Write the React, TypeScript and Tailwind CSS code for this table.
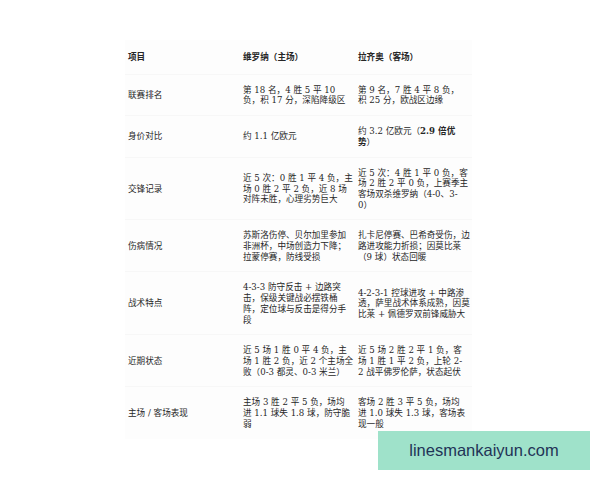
import type { ReactNode } from 'react'

type Row = {
  label: string
  home: ReactNode[]
  away: ReactNode[]
}

const rows: Row[] = [
  {
    label: '联赛排名',
    home: ['第 18 名，4 胜 5 平 10', '负，积 17 分，深陷降级区'],
    away: ['第 9 名，7 胜 4 平 8 负，', '积 25 分，欧战区边缘'],
  },
  {
    label: '身价对比',
    home: ['约 1.1 亿欧元'],
    away: [
      <>
        约 3.2 亿欧元（<b>2.9 倍优</b>
      </>,
      <>
        <b>势</b>）
      </>,
    ],
  },
  {
    label: '交锋记录',
    home: ['近 5 次：0 胜 1 平 4 负，主', '场 0 胜 2 平 2 负，近 8 场', '对阵未胜，心理劣势巨大'],
    away: ['近 5 次：4 胜 1 平 0 负，客', '场 2 胜 2 平 0 负，上赛季主', '客场双杀维罗纳（4-0、3-', '0）'],
  },
  {
    label: '伤病情况',
    home: ['苏斯洛伤停、贝尔加里参加', '非洲杯，中场创造力下降；', '拉蒙停赛，防线受损'],
    away: ['扎卡尼停赛、巴希奇受伤，边', '路进攻能力折损；因莫比莱', '（9 球）状态回暖'],
  },
  {
    label: '战术特点',
    home: ['4-3-3 防守反击 + 边路突', '击，保级关键战必摆铁桶', '阵，定位球与反击是得分手', '段'],
    away: ['4-2-3-1 控球进攻 + 中路渗', '透，萨里战术体系成熟，因莫', '比莱 + 佩德罗双前锋威胁大'],
  },
  {
    label: '近期状态',
    home: ['近 5 场 1 胜 0 平 4 负，主', '场 1 胜 2 负，近 2 个主场全', '败（0-3 都灵、0-3 米兰）'],
    away: ['近 5 场 2 胜 2 平 1 负，客', '场 1 胜 1 平 2 负，上轮 2-', '2 战平佛罗伦萨，状态起伏'],
  },
  {
    label: '主场 / 客场表现',
    home: ['主场 3 胜 2 平 5 负，场均', '进 1.1 球失 1.8 球，防守脆', '弱'],
    away: ['客场 2 胜 3 平 5 负，场均', '进 1.0 球失 1.3 球，客场表', '现一般'],
  },
]

function Lines({ lines }: { lines: ReactNode[] }) {
  return (
    <div className="flex flex-col">
      {lines.map((line, i) => (
        <span key={i} className="whitespace-nowrap">
          {line}
        </span>
      ))}
    </div>
  )
}

export default function App() {
  return (
    <div
      className="relative w-[600px] h-[480px] bg-white overflow-hidden text-[#262626] text-[8.6px] leading-[10.7px]"
      style={{ fontFamily: '"DejaVu Serif", "Noto Sans CJK SC", serif' }}
    >
      <div className="ml-[125px] mt-[40px] w-[347px] bg-[#fdfdfd]">
        {/* Header */}
        <div className="grid grid-cols-[118px_115px_114px] items-center pt-[12px] pb-[11px] border-b border-[#f7f7f7] font-bold">
          <div className="pl-[3px]">项目</div>
          <div>维罗纳（主场）</div>
          <div>拉齐奥（客场）</div>
        </div>

        {rows.map((row) => (
          <div
            key={row.label}
            className="grid grid-cols-[118px_115px_114px] items-center pt-[10px] pb-[9px] border-b border-[#f7f7f7] last:border-b-0 last:pb-[10px]"
          >
            <div className="pl-[3px]">{row.label}</div>
            <Lines lines={row.home} />
            <Lines lines={row.away} />
          </div>
        ))}
      </div>

      {/* Watermark */}
      <div className="absolute left-[378px] top-[431px] w-[212px] h-[39px] bg-[#9fe2ca] flex items-center justify-center">
        <span
          className="text-[16.5px] text-[#1f3457]"
          style={{ fontFamily: '"Liberation Sans", Arial, sans-serif' }}
        >
          linesmankaiyun.com
        </span>
      </div>
    </div>
  )
}
